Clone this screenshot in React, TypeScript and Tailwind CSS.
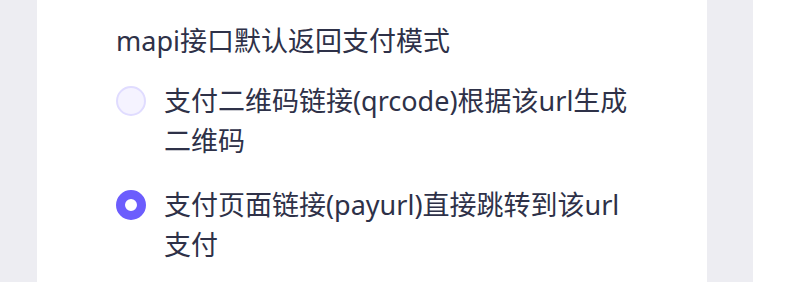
import { useState } from 'react';

const options = [
  { value: 'qrcode', label: '支付二维码链接(qrcode)根据该url生成二维码' },
  { value: 'payurl', label: '支付页面链接(payurl)直接跳转到该url支付' },
];

export default function App() {
  const [mode, setMode] = useState('payurl');

  return (
    <div
      className="flex h-[282px] w-[800px] overflow-hidden bg-white text-[#2e3148]"
      style={{ fontFamily: '"Noto Sans", "Noto Sans CJK SC", sans-serif' }}
    >
      {/* left gutter */}
      <div className="w-[37px] shrink-0 bg-[#ededf2]" />

      {/* card */}
      <div className="w-[670px] shrink-0 bg-white px-[79px] pt-[21px]">
        <div className="text-[27px] leading-[40px]">mapi接口默认返回支付模式</div>

        <div className="mt-[20px] flex flex-col gap-[24px]">
          {options.map((opt) => {
            const checked = mode === opt.value;
            return (
              <label key={opt.value} className="flex cursor-pointer items-start gap-[18px]">
                <span className="flex h-[40px] shrink-0 items-center">
                  {checked ? (
                    <span className="block h-[30px] w-[30px] rounded-full border-[9px] border-[#6c5dfd] bg-white" />
                  ) : (
                    <span className="block h-[30px] w-[30px] rounded-full border-2 border-[#e0dcff] bg-[#f5f3ff]" />
                  )}
                </span>
                <input
                  type="radio"
                  name="mode"
                  value={opt.value}
                  checked={checked}
                  onChange={() => setMode(opt.value)}
                  className="hidden"
                />
                <span className="text-[27px] leading-[40px]">{opt.label}</span>
              </label>
            );
          })}
        </div>
      </div>

      {/* right gutter */}
      <div className="w-[46px] shrink-0 bg-[#ededf2]" />
      <div className="flex-1 bg-white" />
    </div>
  );
}
